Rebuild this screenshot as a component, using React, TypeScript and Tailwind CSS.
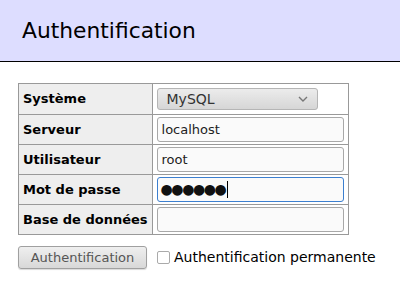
import React from 'react';

const font = { fontFamily: '"DejaVu Sans", Verdana, sans-serif' };

function Field({ value }: { value?: string }) {
  return (
    <div className="h-[25px] w-[187px] rounded-[3px] border border-[#a8a8a8] bg-[#fafafa] px-[4px] flex items-center text-[13px] text-[#222]">
      {value}
    </div>
  );
}

const rows = [
  { label: 'Serveur', value: 'localhost' },
  { label: 'Utilisateur', value: 'root' },
];

export default function App() {
  return (
    <div className="w-[400px] h-[293px] bg-white text-black" style={font}>
      <h2 className="h-[62px] bg-[#ddf] border-b border-black pl-[22px] pt-[2px] flex items-center text-[21.8px] font-normal">
        Authentification
      </h2>

      <div className="pl-[18px] pt-[21px]">
        <table className="border-collapse border border-[#999] text-[13px]">
          <tbody>
            <tr className="h-[31px]">
              <th className="w-[133px] whitespace-nowrap border border-[#999] bg-[#eee] px-[4px] text-left font-bold">Système</th>
              <td className="w-[196px] border border-[#999] pl-[4px]">
                <div className="h-[22px] w-[161px] rounded-[3px] border border-[#b5b5b5] bg-gradient-to-b from-[#ececec] to-[#d6d6d6] flex items-center justify-between pl-[9px] pr-[9px] text-[14px] text-[#333]">
                  <span>MySQL</span>
                  <svg width="10" height="6" viewBox="0 0 10 6" fill="none" stroke="#777" strokeWidth="1.4">
                    <path d="M1 1l4 4 4-4" />
                  </svg>
                </div>
              </td>
            </tr>
            {rows.map((r) => (
              <tr key={r.label} className="h-[30px]">
                <th className="whitespace-nowrap border border-[#999] bg-[#eee] px-[4px] text-left font-bold">{r.label}</th>
                <td className="border border-[#999] pl-[4px]">
                  <Field value={r.value} />
                </td>
              </tr>
            ))}
            <tr className="h-[30px]">
              <th className="whitespace-nowrap border border-[#999] bg-[#eee] px-[4px] text-left font-bold">Mot de passe</th>
              <td className="border border-[#999] pl-[4px]">
                <div className="h-[25px] w-[187px] rounded-[3px] border border-[#3c7fcf] bg-[#fafafa] px-[3px] flex items-center">
                  <span className="text-[14px] tracking-[-1.4px] text-[#111]">●●●●●●</span>
                  <span className="ml-[2px] h-[17px] w-px bg-black" />
                </div>
              </td>
            </tr>
            <tr className="h-[30px]">
              <th className="whitespace-nowrap border border-[#999] bg-[#eee] px-[4px] text-left font-bold">Base de données</th>
              <td className="border border-[#999] pl-[4px]">
                <Field />
              </td>
            </tr>
          </tbody>
        </table>

        <div className="mt-[11px] flex items-center">
          <button className="h-[23px] w-[129px] rounded-[3px] border border-[#a0a0a0] bg-gradient-to-b from-[#efefef] to-[#d8d8d8] text-[13px] text-[#555] shadow-[0_1px_1px_rgba(0,0,0,0.15)]">
            Authentification
          </button>
          <label className="ml-[10px] flex items-center text-[14px]">
            <span className="mr-[4px] h-[13px] w-[13px] rounded-[2px] border border-[#aaa] bg-white" />
            Authentification permanente
          </label>
        </div>
      </div>
    </div>
  );
}
